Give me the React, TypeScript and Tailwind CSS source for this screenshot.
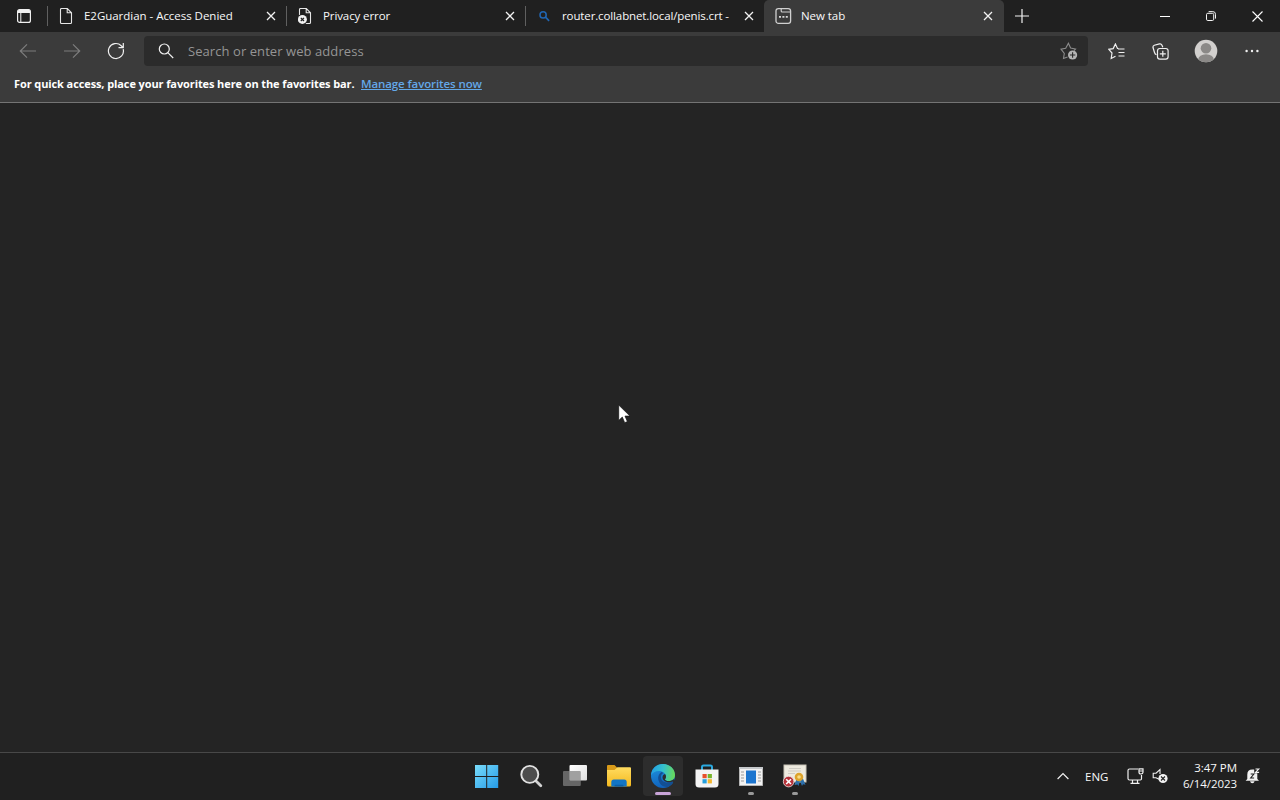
import type { ReactNode } from "react";

function Close() {
  return (
    <svg width="10" height="10" viewBox="0 0 10 10" className="shrink-0">
      <path d="M1 1l8 8M9 1L1 9" stroke="#f2f2f2" strokeWidth="1.3" />
    </svg>
  );
}

function PageIcon({ error = false }: { error?: boolean }) {
  return (
    <svg width="16" height="16" viewBox="0 0 16 16" fill="none">
      <path
        d="M1.5 1.5q0-1 1-1h5.8l4.2 4.3v9.7q0 1-1 1h-9q-1 0-1-1zM8.2.7v4.1h4.1"
        stroke="#e6e6e6"
        strokeWidth="1.1"
      />
      {error && (
        <>
          <circle cx="4.4" cy="11.4" r="5.4" fill="#202020" />
          <circle cx="4.4" cy="11.4" r="4.5" fill="#f2f2f2" />
          <path d="M2.8 9.8L6 13M6 9.8L2.8 13" stroke="#202020" strokeWidth="1.2" />
        </>
      )}
    </svg>
  );
}

function BlueSearch() {
  return (
    <svg width="16" height="16" viewBox="0 0 16 16" fill="none">
      <circle cx="6.1" cy="6.9" r="3.1" stroke="#2066b4" strokeWidth="1.5" />
      <path d="M8.5 9.2l3.6 3.6" stroke="#2066b4" strokeWidth="1.7" />
    </svg>
  );
}

function NewTabIcon() {
  return (
    <svg width="17" height="16" viewBox="0 0 17 16" fill="none">
      <rect x="1" y=".7" width="14.6" height="14.6" rx="2.4" stroke="#d0d0d0" strokeWidth="1.3" />
      <path d="M6.2 1v2q0 1 1 1h8" stroke="#d0d0d0" strokeWidth="1.2" />
      <path d="M4 8.8h2M7.4 8.8h2M10.8 8.8h2" stroke="#d8d8d8" strokeWidth="1.8" />
    </svg>
  );
}

function Tab({
  icon,
  title,
  active = false,
  tracking,
}: {
  icon: ReactNode;
  title: string;
  active?: boolean;
  tracking: string;
}) {
  return (
    <div
      className={
        active
          ? "flex h-8 w-[240px] items-center rounded-t-[5px] bg-[#3b3b3b] pl-[11px]"
          : "flex h-8 w-[239px] items-center"
      }
    >
      {!active && <div className="mr-[11px] h-5 w-px shrink-0 bg-[#606060]" />}
      <div className={active ? "w-[26px] shrink-0" : "w-[25px] shrink-0"}>{icon}</div>
      <div
        className={`w-[170px] shrink-0 overflow-hidden text-[11.5px] leading-4 whitespace-nowrap text-[#f8f8f8] ${tracking}`}
      >
        {title}
      </div>
      <div className="ml-[11.5px] flex">
        <Close />
      </div>
    </div>
  );
}

function ToolButton({ children, className = "w-11" }: { children: ReactNode; className?: string }) {
  return <button className={`flex h-[30px] shrink-0 items-center justify-center ${className}`}>{children}</button>;
}

function Arrow({ flip = false }: { flip?: boolean }) {
  return (
    <svg width="18" height="16" viewBox="0 0 18 16" fill="none" className={flip ? "-scale-x-100" : ""}>
      <path d="M17 8H1.5M8 1.3L1.3 8 8 14.7" stroke="#7d7d7d" strokeWidth="1.2" />
    </svg>
  );
}

function TitleBar() {
  return (
    <div className="flex h-8 bg-[#202020]">
      <div className="flex w-[47px] items-center pl-[17px]">
        <svg width="14" height="14" viewBox="0 0 14 14" fill="none">
          <rect x=".6" y=".6" width="12.8" height="12.8" rx="2" stroke="#f0f0f0" strokeWidth="1.2" />
          <path d="M1 2q0-1.5 1.5-1.5h9Q13 .5 13 2v2H1z" fill="#f0f0f0" />
          <path d="M3.8 4v9" stroke="#f0f0f0" strokeWidth="1" />
        </svg>
      </div>
      <Tab icon={<PageIcon />} title="E2Guardian - Access Denied" tracking="tracking-[-0.03px]" />
      <Tab icon={<PageIcon error />} title="Privacy error" tracking="tracking-[-0.1px]" />
      <Tab icon={<BlueSearch />} title="router.collabnet.local/penis.crt -" tracking="tracking-[-0.12px]" />
      <Tab icon={<NewTabIcon />} title="New tab" active tracking="tracking-[-0.05px]" />
      <div className="flex w-[35px] items-center justify-center">
        <svg width="14" height="14" viewBox="0 0 14 14">
          <path d="M7 0v14M0 7h14" stroke="#f2f2f2" strokeWidth="1.2" />
        </svg>
      </div>
      <div className="ml-auto flex">
        <div className="flex w-[46px] items-center justify-center">
          <div className="h-px w-[10px] bg-white" />
        </div>
        <div className="flex w-[46px] items-center justify-center">
          <svg width="10" height="10" viewBox="0 0 10 10" fill="none" stroke="#f4f4f4">
            <rect x=".5" y="2.3" width="7.2" height="7.2" rx="1.3" />
            <path d="M2.6.6h4.2q2.7 0 2.7 2.7v4.3" />
          </svg>
        </div>
        <div className="flex w-[46px] items-center justify-center">
          <svg width="11" height="11" viewBox="0 0 11 11">
            <path d="M.5.5l10 10M10.5.5l-10 10" stroke="#fff" strokeWidth="1.1" />
          </svg>
        </div>
      </div>
    </div>
  );
}

function Toolbar() {
  return (
    <div className="h-[71px] border-b border-[#747474] bg-[#3b3b3b] pt-1">
      <div className="flex h-[30px] pl-[6px]">
        <ToolButton>
          <Arrow />
        </ToolButton>
        <ToolButton>
          <Arrow flip />
        </ToolButton>
        <ToolButton>
          <svg width="18" height="18" viewBox="0 0 18 18" fill="none" stroke="#f0f0f0" strokeWidth="1.2">
            <path d="M16.2 7.2A7.5 7.5 0 1 1 14.2 3.7l1.8 1.8M16.3 1v4.7h-4.8" />
          </svg>
        </ToolButton>
        <div className="ml-[6px] flex w-[944px] items-center rounded-[4px] bg-[#2b2b2b] pr-[10px] pl-[14px]">
          <svg width="16" height="16" viewBox="0 0 16 16" fill="none" stroke="#f0f0f0" strokeWidth="1.2">
            <circle cx="6.3" cy="6" r="5" />
            <path d="M9.8 9.6l5.4 5.4" />
          </svg>
          <span className="ml-[14px] text-[13px] leading-5 tracking-[0.07px] text-[#959595]">
            Search or enter web address
          </span>
          <svg width="18" height="18" viewBox="0 0 18 18" fill="none" className="ml-auto">
            <path
              d="M7.5 15l-4 1.5.8-5L1 7.2l4.7-.9L8.4 1.3l2.2 4.8 4.9.9-1.5 1.5"
              stroke="#8c8c8c"
              strokeWidth="1.1"
            />
            <circle cx="12.6" cy="13" r="4.6" fill="#b4b4b4" />
            <path d="M12.6 10.3v5.4M9.9 13h5.4" stroke="#2b2b2b" strokeWidth="1.1" />
          </svg>
        </div>
        <ToolButton className="ml-[6px] w-11">
          <svg width="17" height="17" viewBox="0 0 17 17" fill="none" stroke="#f0f0f0" strokeWidth="1.2">
            <path d="M10.5 5.5l-1-.1L7.4 1 5.2 5.6.8 6.3 4 10l-.8 5.5 4.3-2.2M10 6h6.500M10.500 9.500h6M10.500 13h6" />
          </svg>
        </ToolButton>
        <ToolButton>
          <svg width="17" height="17" viewBox="0 0 17 17" fill="none" stroke="#f0f0f0" strokeWidth="1.2">
            <path d="M4.5 11.8Q3 11.3 2.5 9.5L1 4.5Q.7 2.8 2.3 2.2L7.5.9q1.7-.4 2.5 1.3l.8 2" />
            <rect x="5.5" y="5.5" width="10.6" height="10.6" rx="2.3" />
            <path d="M10.8 7.8v6M7.8 10.8h6" />
          </svg>
        </ToolButton>
        <ToolButton className="w-12">
          <svg width="24" height="24" viewBox="0 0 24 24">
            <clipPath id="avatar">
              <circle cx="12" cy="12" r="11.3" />
            </clipPath>
            <circle cx="12" cy="12" r="11.3" fill="#d2d0ce" />
            <g clipPath="url(#avatar)" fill="#8b8987">
              <circle cx="12" cy="9.2" r="5.3" />
              <ellipse cx="12" cy="20.5" rx="7.8" ry="5.3" />
            </g>
          </svg>
        </ToolButton>
        <ToolButton>
          <svg width="14" height="4" viewBox="0 0 14 4" fill="#f0f0f0">
            <circle cx="1.6" cy="2" r="1.2" />
            <circle cx="7" cy="2" r="1.2" />
            <circle cx="12.4" cy="2" r="1.2" />
          </svg>
        </ToolButton>
      </div>
      <div className="flex h-9 items-center pb-px pl-[14px] text-[11px] leading-4 whitespace-nowrap">
        <span className="w-[347px] font-bold tracking-[-0.1px] text-white">
          For quick access, place your favorites here on the favorites bar.
        </span>
        <a className="text-[11.5px] font-semibold tracking-[-0.1px] text-[#63a8e8] underline">
          Manage favorites now
        </a>
      </div>
    </div>
  );
}

function TaskItem({
  children,
  active = false,
  running = false,
}: {
  children: ReactNode;
  active?: boolean;
  running?: boolean;
}) {
  return (
    <div
      className={`flex h-10 w-10 flex-col items-center rounded-[4px] pt-2 ${active ? "bg-[#2d2d2d]" : ""}`}
    >
      <div className="flex h-6 items-center">{children}</div>
      {active && <div className="mt-1 h-[3px] w-4 rounded-full bg-[#c8a4d8]" />}
      {running && <div className="mt-1 h-[3px] w-[6px] rounded-full bg-[#999999]" />}
    </div>
  );
}

function Taskbar() {
  return (
    <div className="flex h-12 items-start border-t border-[#484848] bg-[#202020] pt-[3px]">
      <div className="ml-[467px] flex gap-1">
        <TaskItem>
          <svg width="24" height="24" viewBox="0 0 24 24">
            <defs>
              <linearGradient id="win" x1="0" y1="0" x2="1" y2="1">
                <stop offset="0" stopColor="#79dcfa" />
                <stop offset="1" stopColor="#259be8" />
              </linearGradient>
            </defs>
            <path d="M0 1h11.2v11H0zM12.2 1h11v11h-11zM0 13h11.2v11H0zM12.2 13h11v11h-11z" fill="url(#win)" />
          </svg>
        </TaskItem>
        <TaskItem>
          <svg width="24" height="24" viewBox="0 0 24 24">
            <path d="M17 17l4.8 4.8" stroke="#d2d2d2" strokeWidth="2.8" strokeLinecap="round" />
            <circle cx="10.8" cy="10.4" r="8.5" fill="#4d4d4d" stroke="#e2e2e2" strokeWidth="1.9" />
          </svg>
        </TaskItem>
        <TaskItem>
          <svg width="26" height="24" viewBox="0 0 26 24">
            <defs>
              <linearGradient id="view" x1="0" y1="0" x2="1" y2="1">
                <stop stopColor="#fff" />
                <stop offset="1" stopColor="#dedede" />
              </linearGradient>
            </defs>
            <rect x="7.5" y="1" width="17.5" height="15.5" rx="1" fill="url(#view)" />
            <path d="M2 7h5.500v9.500h11.300V21q0 1-1 1H2q-1 0-1-1V8q0-1 1-1z" fill="#666" />
            <path d="M7.500 7h10.300q1 0 1 1v8.500H7.500z" fill="#a0a0a0" />
          </svg>
        </TaskItem>
        <TaskItem>
          <svg width="26" height="24" viewBox="0 0 26 24">
            <defs>
              <linearGradient id="folder" x1="0" y1="0" x2="0" y2="1">
                <stop stopColor="#ffdc60" />
                <stop offset="1" stopColor="#f4b91f" />
              </linearGradient>
            </defs>
            <path d="M1 2q0-1 1-1h6.500l3 3v4H1z" fill="#d99b19" />
            <path d="M1 6h7.500l3-2.800H24q1 0 1 1V21q0 1.500-1.500 1.500h-21Q1 22.500 1 21z" fill="url(#folder)" />
            <path d="M5.300 22.500V18q0-2.500 2.500-2.500h10.400q2.500 0 2.500 2.500v4.500z" fill="#1275c4" />
            <path d="M8.500 22.500v-.8q0-1 1-1h7q1 0 1 1v.8z" fill="#0a5fa8" />
          </svg>
        </TaskItem>
        <TaskItem active>
          <svg width="26" height="26" viewBox="0 0 26 26">
            <defs>
              <linearGradient id="edgeTop" x1="0" y1=".4" x2="1" y2=".5">
                <stop stopColor="#229fe5" />
                <stop offset=".5" stopColor="#35c1cc" />
                <stop offset="1" stopColor="#69da57" />
              </linearGradient>
              <linearGradient id="edgeBody" x1="0" y1="0" x2=".3" y2="1">
                <stop stopColor="#2097df" />
                <stop offset="1" stopColor="#1063bd" />
              </linearGradient>
            </defs>
            <circle cx="13" cy="13" r="12" fill="url(#edgeBody)" />
            <path
              d="M1 12.200C1.500 5.500 6.500 1 13 1c7 0 12 5 12 11 0 4-3 6-6.500 6-2 0-3.500-.7-3.500-1.500 0-.6 1-1 1-3C16 10.500 13 8 9 8c-3.800 0-6.600 1.900-8 4.200z"
              fill="url(#edgeTop)"
            />
            <path
              d="M11.500 9C8 11.500 7.500 15 9 18.500c1.500 4 5.500 6.300 9.500 5.200 2-1.100 3.700-2.700 4.800-4.500.2-.5-.2-.8-.7-.6-5.300 2.200-11.600.8-11.700-4.600 0-1.800.8-3 2.500-3.900z"
              fill="#134f93"
            />
            <path
              d="M22.800 18.600c-2.300 1-6.800 1.200-9-1.300-2-2.200-1.500-5.300 1.200-6.300.7.800 1 1.600 1 2.500 0 2-1 2.400-1 3 0 .8 1.500 1.500 3.500 1.500 2.200 0 4-.6 5.200-1.800 1.700 1.300 1.200 3.200 0 4z"
              fill="#2d2d2d"
            />
          </svg>
        </TaskItem>
        <TaskItem>
          <svg width="26" height="26" viewBox="0 0 26 26">
            <path d="M8 7V4Q8 2.500 9.500 2.500h7q1.500 0 1.500 1.500v3" fill="none" stroke="#2ba9df" strokeWidth="2" />
            <path d="M1.500 6.500h23V21q0 3.500-3.500 3.500H5q-3.500 0-3.500-3.500z" fill="#f4f4f4" />
            <path d="M8.500 11h4.200v4.200H8.500z" fill="#e8502c" />
            <path d="M13.700 11h4.200v4.200h-4.200z" fill="#76b42b" />
            <path d="M8.500 16.200h4.200v4.200H8.500z" fill="#249fdd" />
            <path d="M13.700 16.200h4.200v4.200h-4.200z" fill="#f5b52b" />
          </svg>
        </TaskItem>
        <TaskItem running>
          <svg width="26" height="24" viewBox="0 0 26 24">
            <rect x="1.3" y="3.3" width="23.4" height="18.4" fill="#f2f2f2" stroke="#b8b8b8" strokeWidth=".6" />
            <path d="M1 3h24v2H1z" fill="#c5c8cb" />
            <rect x="8" y="6.5" width="10" height="13" fill="#1c75cf" />
            <path d="M3 8h3M3 11h3M3 14h3M3 17h3M20 8h3M20 11h3M20 14h3M20 17h3" stroke="#9b9b9b" />
          </svg>
        </TaskItem>
        <TaskItem running>
          <svg width="26" height="24" viewBox="0 0 26 24">
            <rect x="2" y="1" width="22" height="17" fill="#eeeadf" stroke="#c8c4b8" />
            <path d="M7 4.500h12M6 7h13M6 9.500h7" stroke="#d0cdc4" />
            <path d="M14.500 15l-2 6 3-.6 1 1.600 1.500-5 2 5 1-1.800 2.500.5-2.500-6z" fill="#2c6fab" />
            <circle cx="17" cy="13" r="4.3" fill="#dda32c" />
            <circle cx="17" cy="13" r="1.8" fill="#f9dc82" />
            <circle cx="6.6" cy="17.6" r="5.3" fill="#b63239" stroke="#ece2e2" strokeWidth=".8" />
            <path d="M4.200 15.200L9 20M9 15.200L4.200 20" stroke="#fff" strokeWidth="1.6" />
          </svg>
        </TaskItem>
      </div>
      <div className="ml-auto flex h-10 items-center pr-[19px] text-[#f8f8f8]">
        <svg width="12" height="8" viewBox="0 0 12 8" fill="none">
          <path d="M.6 7L6 1.500 11.400 7" stroke="#f0f0f0" strokeWidth="1.2" />
        </svg>
        <span className="ml-4 w-[42px] pt-px text-[11.5px] leading-4">ENG</span>
        <svg width="17" height="16" viewBox="0 0 17 16" fill="none" stroke="#f0f0f0" strokeWidth="1.2">
          <path d="M11 1H2.500Q1 1 1 2.500v8Q1 12 2.500 12h10.800q1.200 0 1.200-1.200V7M5.500 12.500v3M10.500 12.500v3M3.500 15.400h9" />
          <path d="M12 .8h4v3.500q0 1.700-2 1.700t-2-1.700zM12 3h4" />
        </svg>
        <svg width="17" height="16" viewBox="0 0 17 16" fill="none" className="ml-2">
          <path d="M7 11.200L4 9.800H1.200V5.200H4l4-3.700v4.500" stroke="#f0f0f0" strokeWidth="1.1" />
          <circle cx="11" cy="10.5" r="4.6" fill="#f2f2f2" />
          <path d="M9 8.500l4 4M13 8.500l-4 4" stroke="#202020" strokeWidth="1.1" />
        </svg>
        <div className="ml-[12px] w-[56px] text-right text-[11.5px] leading-4 tracking-[-0.05px] whitespace-nowrap">
          <div>3:47 PM</div>
          <div>6/14/2023</div>
        </div>
        <svg width="16" height="16" viewBox="0 0 16 16" className="ml-2">
          <path d="M2.300 11V6.500Q2.300 1.500 7.300 1.500h1.900v3.800h3.100V11l1.700 1.700H.6z" fill="#f2f2f2" />
          <path d="M5 13.300h4.600q-.6 2-2.300 2t-2.300-2z" fill="#f2f2f2" />
          <path d="M10.500 1h3.300l-3.300 3.400h3.600" stroke="#f2f2f2" strokeWidth="1.1" fill="none" />
          <path d="M5.700 6h3.200L5.700 10h3.400" stroke="#202020" strokeWidth="1.1" fill="none" />
        </svg>
      </div>
    </div>
  );
}

export default function App() {
  return (
    <div className="relative flex h-[800px] w-[1280px] flex-col overflow-hidden bg-[#242424] font-['Open_Sans','Noto_Sans',sans-serif]">
      <TitleBar />
      <Toolbar />
      <main className="flex-1" />
      <Taskbar />
      <svg width="13" height="20" viewBox="0 0 13 20" className="absolute top-[404px] left-[618px]">
        <path d="M.7 1v15.500l3.600-3.400 2.400 5.600 2.700-1.100-2.400-5.500h5z" fill="#fff" stroke="#111" strokeWidth=".7" />
      </svg>
    </div>
  );
}
